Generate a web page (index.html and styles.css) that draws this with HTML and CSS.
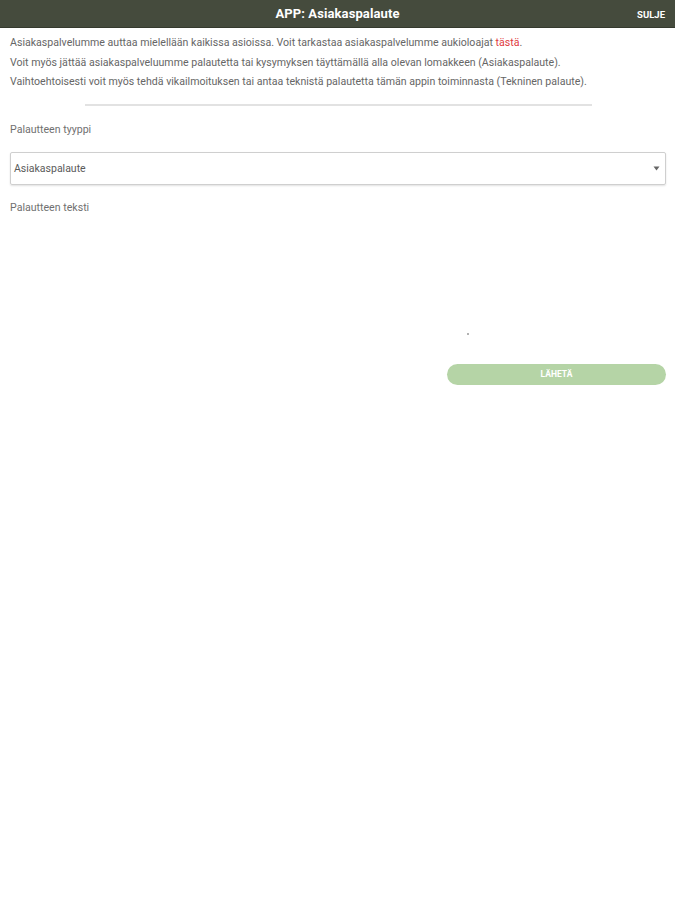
FILE: index.html
```html
<!DOCTYPE html>
<html lang="fi">
<head>
<meta charset="utf-8">
<title>APP: Asiakaspalaute</title>
<link rel="stylesheet" href="styles.css">
</head>
<body>
<header class="topbar">
  <h1 class="title">APP: Asiakaspalaute</h1>
  <button class="close">SULJE</button>
</header>
<main class="content">
  <p class="info">Asiakaspalvelumme auttaa mielellään kaikissa asioissa. Voit tarkastaa asiakaspalvelumme aukioloajat <a class="link" href="#">tästä</a>.</p>
  <p class="info">Voit myös jättää asiakaspalveluumme palautetta tai kysymyksen täyttämällä alla olevan lomakkeen (Asiakaspalaute).</p>
  <p class="info">Vaihtoehtoisesti voit myös tehdä vikailmoituksen tai antaa teknistä palautetta tämän appin toiminnasta (Tekninen palaute).</p>
  <hr class="divider">
  <label class="label">Palautteen tyyppi</label>
  <div class="select">
    <span class="select-value">Asiakaspalaute</span>
    <svg class="caret" width="7" height="5" viewBox="0 0 7 5"><path d="M0.5 0.5 L6.5 0.5 L3.5 4.5 Z" fill="#666"/></svg>
  </div>
  <label class="label label-text">Palautteen teksti</label>
  <div class="textarea"><span class="dot"></span></div>
  <div class="actions">
    <button class="send">LÄHETÄ</button>
  </div>
</main>
</body>
</html>
```
FILE: styles.css
```css
* { box-sizing: border-box; }
html, body { margin: 0; padding: 0; background: #fff; }
body { font-family: Roboto, "Noto Sans", "Liberation Sans", sans-serif; color: #555; }

.topbar {
  height: 28px;
  background: #454b3d;
  border-bottom: 1px solid #353a2e;
  display: flex;
  align-items: center;
  justify-content: center;
  position: relative;
}
.title {
  margin: 0;
  font-size: 13px;
  font-weight: 700;
  color: #fff;
  letter-spacing: 0.1px;
}
.close {
  position: absolute;
  right: 10px;
  top: 9px;
  background: none;
  border: 0;
  padding: 0;
  color: #fff;
  font-family: inherit;
  font-size: 9.5px;
  font-weight: 700;
}

.content { padding: 5px 9px 0 10px; }
.info {
  margin: 0;
  font-size: 10.6px;
  line-height: 19.5px;
  color: #666;
}
.link { color: #e0393e; text-decoration: none; }

.divider {
  margin: 12px 74px 0 75px;
  border: 0;
  height: 2px;
  background: #e2e2e2;
}

.label {
  display: block;
  font-size: 10.6px;
  color: #707070;
  margin-top: 17px;
  line-height: 14px;
}
.select {
  margin-top: 15px;
  height: 33px;
  border: 1px solid #cfcfcf;
  border-radius: 2px;
  box-shadow: 0 1px 2px rgba(0,0,0,0.12);
  display: flex;
  align-items: center;
  justify-content: space-between;
  padding: 0 5px 0 3px;
  font-size: 10.5px;
  color: #5a5a5a;
}
.label-text { margin-top: 16px; }
.textarea {
  height: 149px;
  position: relative;
}
.dot {
  position: absolute;
  left: 457px;
  top: 118px;
  width: 2px;
  height: 2px;
  border-radius: 50%;
  background: #999;
}
.actions { display: flex; justify-content: flex-end; }
.send {
  width: 219px;
  height: 21px;
  border: 0;
  border-radius: 11px;
  background: #b5d4a6;
  color: #fff;
  font-family: inherit;
  font-size: 8.5px;
  font-weight: 700;
  padding: 0;
}
```
